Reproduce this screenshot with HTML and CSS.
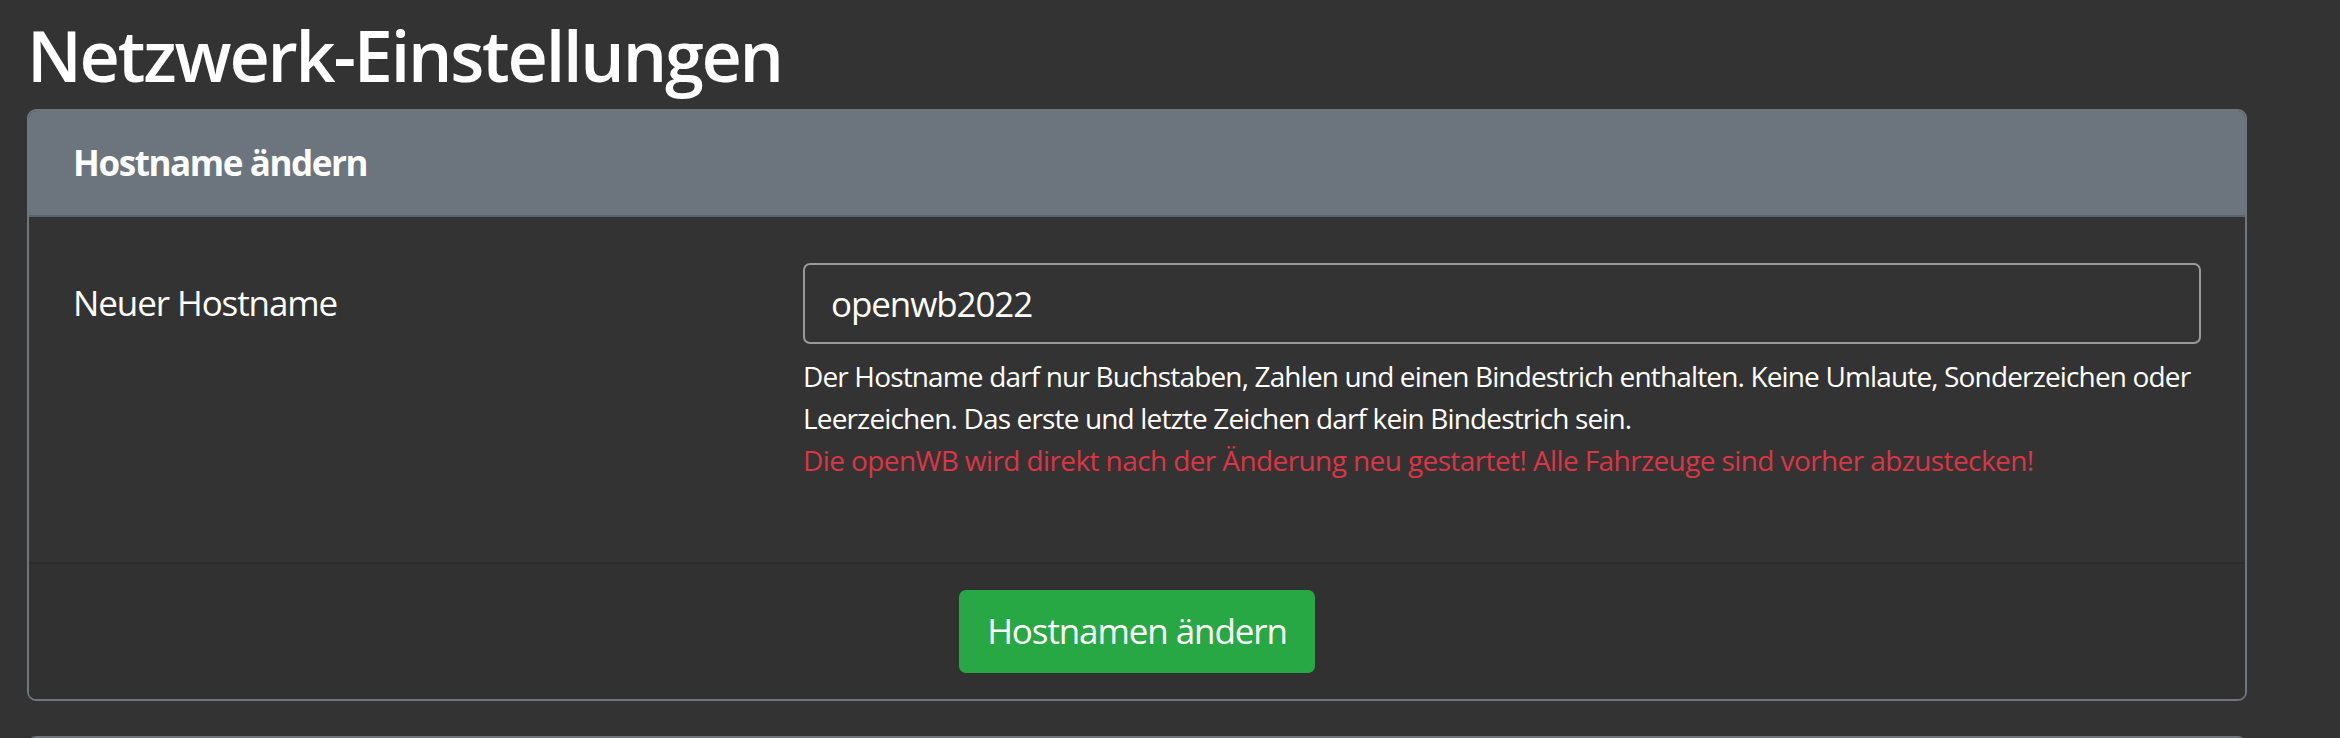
FILE: index.html
```html
<!DOCTYPE html>
<html lang="de">
<head>
<meta charset="utf-8">
<title>Netzwerk-Einstellungen</title>
<link rel="stylesheet" href="styles.css">
</head>
<body>
<main class="container">
  <h1 class="page-title">Netzwerk-Einstellungen</h1>
  <section class="card">
    <header class="card-header">
      <h2 class="card-title">Hostname ändern</h2>
    </header>
    <div class="card-body">
      <div class="form-row">
        <label class="form-label" for="hostname">Neuer Hostname</label>
        <div class="form-field">
          <input class="form-control" id="hostname" type="text" value="openwb2022">
          <p class="form-text">Der Hostname darf nur Buchstaben, Zahlen und einen Bindestrich enthalten. Keine Umlaute, Sonderzeichen oder Leerzeichen. Das erste und letzte Zeichen darf kein Bindestrich sein.<span class="text-danger">Die openWB wird direkt nach der Änderung neu gestartet! Alle Fahrzeuge sind vorher abzustecken!</span></p>
        </div>
      </div>
    </div>
    <footer class="card-footer">
      <button class="btn btn-success" type="button">Hostnamen ändern</button>
    </footer>
  </section>
  <section class="card">
    <header class="card-header">
      <h2 class="card-title">&nbsp;</h2>
    </header>
  </section>
</main>
</body>
</html>
```

FILE: styles.css
```css
* {
  box-sizing: border-box;
}

html,
body {
  margin: 0;
  background: #333333;
  color: #ffffff;
  font-family: "Open Sans", "Noto Sans", sans-serif;
}

.container {
  width: 2220px;
  margin-left: 27px;
  padding-top: 13px;
}

.page-title {
  margin: 0 0 12px 0;
  font-size: 70px;
  font-weight: 600;
  line-height: 84px;
  letter-spacing: -2.2px;
}

.card {
  border: 2px solid #6f757b;
  border-radius: 9px;
  overflow: hidden;
  margin-bottom: 35px;
}

.card-header {
  background: #6c757d;
  padding: 31px 44px;
  border-bottom: 2px solid #5c646b;
}

.card-title {
  margin: 0;
  font-size: 35px;
  font-weight: 700;
  line-height: 42px;
  letter-spacing: -1.4px;
}

.card-body {
  padding: 46px 44px 81px 44px;
}

.form-row {
  display: grid;
  grid-template-columns: 1fr 2fr;
  column-gap: 31px;
}

.form-label {
  font-size: 35px;
  line-height: 52.5px;
  padding-top: 14px;
  letter-spacing: -1.1px;
}

.form-control {
  display: block;
  width: 100%;
  height: 81px;
  padding: 0 26px;
  background: #333333;
  color: #ffffff;
  border: 2px solid #9a9a9a;
  border-radius: 7px;
  font-family: "Open Sans", "Noto Sans", sans-serif;
  font-size: 35px;
  letter-spacing: -1.1px;
  outline: none;
}

.form-text {
  margin: 11px 0 0 0;
  font-size: 28px;
  line-height: 42px;
  letter-spacing: -0.85px;
}

.text-danger {
  display: block;
  color: #dc3545;
  letter-spacing: -0.6px;
}

.card-footer {
  display: flex;
  justify-content: center;
  padding: 26px 44px;
  background: #313131;
  border-top: 2px solid #2c2c2c;
}

.btn {
  font-family: "Open Sans", "Noto Sans", sans-serif;
  font-size: 35px;
  line-height: 52.5px;
  padding: 13px 26px;
  border-radius: 7px;
  letter-spacing: -1.1px;
  cursor: pointer;
}

.btn-success {
  background: #28a745;
  border: 2px solid #28a745;
  color: #ffffff;
}
```
